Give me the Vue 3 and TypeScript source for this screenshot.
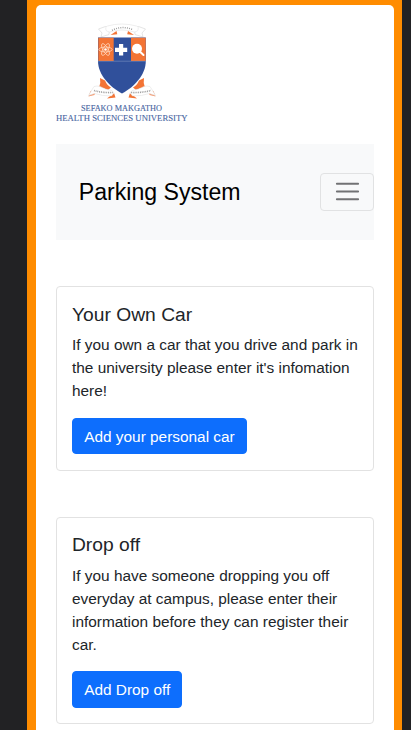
<script setup lang="ts">
interface Card {
  title: string
  text: string
  action: string
}

const cards: Card[] = [
  {
    title: 'Your Own Car',
    text: "If you own a car that you drive and park in the university please enter it's infomation here!",
    action: 'Add your personal car',
  },
  {
    title: 'Drop off',
    text: 'If you have someone dropping you off everyday at campus, please enter their information before they can register their car.',
    action: 'Add Drop off',
  },
]
</script>

<template>
  <div class="page">
    <div class="frame">
      <main class="sheet">
        <svg class="logo" viewBox="55 20 133 105" role="img" aria-label="Sefako Makgatho Health Sciences University">
          <!-- top ribbon -->
          <path d="M98.500 29l7-2.500 4 2-.5 6-8 2.500 1-4zM145.500 29l-7-2.500-4 2 .5 6 8 2.500-1-4z" fill="#fff" stroke="#d4d4d4" stroke-width=".6" />
          <path d="M106.500 31q-2-4 1-5 14-4 29 0 3 1 1 5l-3 1q-12.500-4-25 0z" fill="#fff" stroke="#dcdcdc" stroke-width=".5" />
          <path d="M110.500 35l6-4 .8 3.300zM134 35l-6-4-.8 3.300z" fill="#f37435" />
          <path d="M112 30.300q10-5 20.500-.8" fill="none" stroke="#999" stroke-width="1.500" stroke-dasharray=".9 1.300" />
          <!-- bottom ribbons -->
          <path d="M100 78l5 2.500q2 5 6 7l-3 2.500q-4-2.500-9-2.500 2-5 1-9.500zM144 78l-5 2.500q-2 5-6 7l3 2.500q4-2.500 9-2.500-2-5-1-9.500z" fill="#f37435" />
          <path d="M90.500 91l5-1-1 5-6 1.500zM153.500 91l-5-1 1 5 6 1.500z" fill="#f59a70" />
          <path d="M107 98.500l7-5.500 1.500 4.500zM137 98.500l-7-5.500-1.500 4.500z" fill="#f37435" />
          <path d="M94 86.500q3-1 6 0 6 3.500 12 4l2 2.500-2.500 3q-10 0-17-2.500l-6 2 3-5zM150 86.500q-3-1-6 0-6 3.500-12 4l-2 2.500 2.500 3q10 0 17-2.500l6 2-3-5z" fill="#fff" stroke="#dcdcdc" stroke-width=".5" />
          <path d="M94 90.500q8 2.500 19 2M131 92.500q10 .5 20-2" fill="none" stroke="#999" stroke-width="1.600" stroke-dasharray=".9 .9" />
          <!-- shield -->
          <path d="M98 37.500h47.800V61C145.800 75 134 87 122 93.500C110 87 98 75 98 61z" fill="#30509b" />
          <path d="M98.300 37.800h15.400v23.200H98.300zM131 37.800h14.700v23.200H131z" fill="#f37435" />
          <path d="M98 61.200h48" stroke="#8da0c8" stroke-width=".5" />
          <path d="M119 44h4.200v3.700h4v4.200h-4v3.700H119v-3.700h-4v-4.200h4z" fill="#fff" />
          <g fill="none" stroke="#ffd6bd" stroke-width=".8">
            <ellipse cx="105.500" cy="49.500" rx="6.600" ry="2.500" />
            <ellipse cx="105.500" cy="49.500" rx="6.600" ry="2.500" transform="rotate(60 105.500 49.500)" />
            <ellipse cx="105.500" cy="49.500" rx="6.600" ry="2.500" transform="rotate(120 105.500 49.500)" />
          </g>
          <circle cx="105.500" cy="49.500" r="1.300" fill="#fff" />
          <circle cx="137" cy="48.700" r="5" fill="#fff" />
          <path d="M140.300 52l3.200 3" stroke="#fff" stroke-width="2" stroke-linecap="round" />
          <text class="name small" x="81" y="111" textLength="81" lengthAdjust="spacingAndGlyphs">SEFAKO MAKGATHO</text>
          <text class="name" x="56" y="120.700" textLength="131.500" lengthAdjust="spacingAndGlyphs">HEALTH SCIENCES UNIVERSITY</text>
        </svg>

        <nav class="navbar">
          <span class="brand">Parking System</span>
          <button class="toggler" type="button" aria-label="Toggle navigation">
            <svg class="bars" viewBox="0 0 30 30">
              <path d="M4 7h22M4 15h22M4 23h22" stroke="#717274" stroke-width="2" stroke-linecap="round" />
            </svg>
          </button>
        </nav>

        <section v-for="card in cards" :key="card.title" class="card">
          <h5>{{ card.title }}</h5>
          <p>{{ card.text }}</p>
          <button class="action" type="button">{{ card.action }}</button>
        </section>
      </main>
    </div>
  </div>
</template>

<style>
body {
  background: #222224;
  overflow: hidden;
}
</style>

<style scoped>
.page {
  box-sizing: border-box;
  height: 730px;
  padding: 0 9px 0 27px;
  overflow: hidden;
  background: #222224;
  font-family: "Liberation Sans", Arial, sans-serif;
  font-size: 15.4px;
  line-height: 23.1px;
  color: #212529;
}
.frame {
  box-sizing: border-box;
  min-height: 730px;
  padding: 5.4px 8.4px 0 9.2px;
  background: #ff8c00;
}
.sheet {
  box-sizing: border-box;
  min-height: 780px;
  padding: 14.6px 19.2px 15px 19.4px;
  background: #fff;
  border-radius: 5px;
}
.logo {
  display: block;
  width: 133px;
  height: 105px;
  margin-left: -.6px;
}
.name {
  font: 7.8px "Liberation Serif", serif;
  fill: #48659f;
  stroke: #48659f;
  stroke-width: .1px;
}
.small {
  font-size: 7.2px;
}
.navbar {
  display: flex;
  align-items: center;
  justify-content: space-between;
  box-sizing: border-box;
  height: 96px;
  margin: 19px 0 46.4px;
  padding-left: 23.2px;
  background: #f8f9fa;
}
.brand {
  padding-top: 1px;
  font-size: 23.1px;
  color: #000;
}
.toggler {
  display: flex;
  align-items: center;
  justify-content: center;
  box-sizing: border-box;
  width: 54px;
  height: 38px;
  padding: 0;
  background: transparent;
  border: 1px solid #e1e2e3;
  border-radius: 4px;
}
.bars {
  width: 29px;
  height: 29px;
}
.card {
  padding: 15.4px;
  margin-bottom: 46px;
  border: 1px solid #e2e2e2;
  border-radius: 4px;
}
h5 {
  margin: 0 0 7.3px;
  font-size: 19.25px;
  font-weight: 400;
  line-height: 23.1px;
}
p {
  margin: 0 0 15.4px;
}
.action {
  display: block;
  box-sizing: border-box;
  height: 36.6px;
  padding: 0 11.2px;
  font: inherit;
  color: #fff;
  background: #0d6efd;
  border: 1px solid #0d6efd;
  border-radius: 4px;
}
</style>
